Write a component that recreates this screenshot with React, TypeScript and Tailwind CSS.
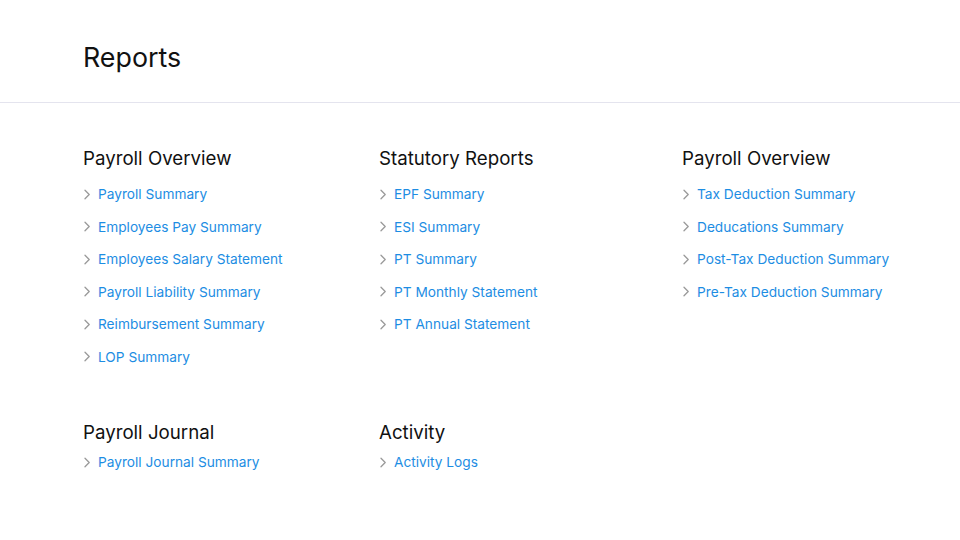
import React from 'react';

type Section = { title: string; links: string[]; gap: string };

const sections: Section[] = [
    {
        title: 'Payroll Overview',
        gap: 'mt-[7px]',
        links: [
            'Payroll Summary',
            'Employees Pay Summary',
            'Employees Salary Statement',
            'Payroll Liability Summary',
            'Reimbursement Summary',
            'LOP Summary',
        ],
    },
    {
        title: 'Statutory Reports',
        gap: 'mt-[7px]',
        links: ['EPF Summary', 'ESI Summary', 'PT Summary', 'PT Monthly Statement', 'PT Annual Statement'],
    },
    {
        title: 'Payroll Overview',
        gap: 'mt-[7px]',
        links: [
            'Tax Deduction Summary',
            'Deducations Summary',
            'Post-Tax Deduction Summary',
            'Pre-Tax Deduction Summary',
        ],
    },
    { title: 'Payroll Journal', gap: 'mt-[1px]', links: ['Payroll Journal Summary'] },
    { title: 'Activity', gap: 'mt-[1px]', links: ['Activity Logs'] },
];

const Chevron: React.FC = () => (
    <svg width="8" height="11" viewBox="0 0 8 11" fill="none" className="shrink-0">
        <path d="M2 1.2 L6.2 5.5 L2 9.8" stroke="#9a9a9a" strokeWidth="1.3" strokeLinecap="round" strokeLinejoin="round" />
    </svg>
);

const ReportSection: React.FC<{ section: Section }> = ({ section }) => (
    <div>
        <h2 className="text-[18.7px] leading-[24px] text-[#111] font-normal whitespace-nowrap">{section.title}</h2>
        <ul className={section.gap}>
            {section.links.map(link => (
                <li key={link} className="h-[32.5px] flex items-center gap-[7px] whitespace-nowrap">
                    <Chevron />
                    <a href="#" className="text-[13.7px] text-[#1d8de3] leading-[20px]">
                        {link}
                    </a>
                </li>
            ))}
        </ul>
    </div>
);

const App: React.FC = () => {
    return (
        <div className="w-[960px] h-[540px] bg-white overflow-hidden" style={{ fontFamily: 'Inter, "Noto Sans", sans-serif' }}>
            <header className="h-[103px] border-b border-[#e4e4ee] px-[83px] pt-[12px] flex items-center">
                <h1 className="text-[26.8px] leading-[32px] text-[#111]">Reports</h1>
            </header>

            <main className="px-[83px] pt-[44px] grid grid-cols-[296px_303px_1fr] gap-y-[48px]">
                {sections.map((s, i) => (
                    <ReportSection key={i} section={s} />
                ))}
            </main>
        </div>
    );
};

export default App;
